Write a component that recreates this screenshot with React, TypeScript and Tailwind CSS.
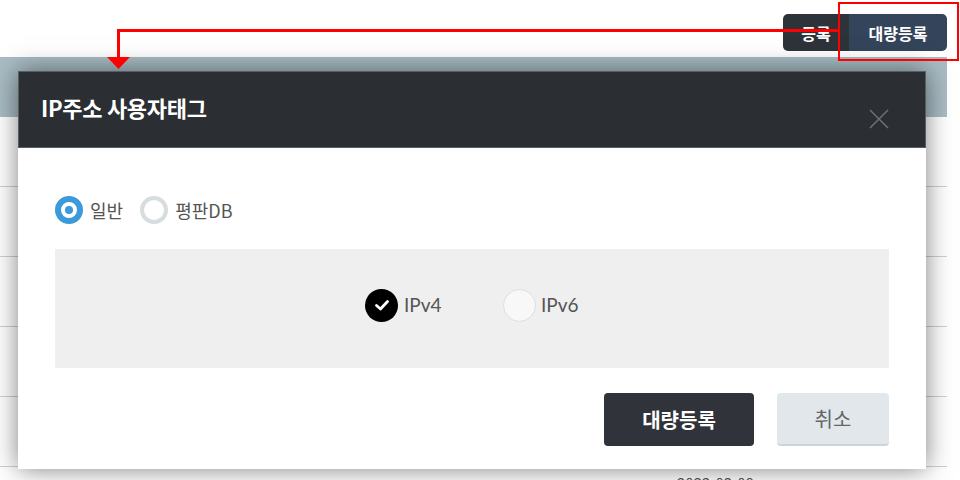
import React from "react";

const KR = { fontFamily: '"Noto Sans CJK KR", "Noto Sans", sans-serif' };
const LATO = { fontFamily: 'Lato, "Noto Sans CJK KR", sans-serif' };

export default function App() {
  const rows = [0, 1, 2, 3, 4];
  return (
    <div className="relative w-[960px] h-[480px] overflow-hidden bg-white" style={KR}>
      {/* toolbar */}
      <div className="flex justify-end h-[57px] pt-[14px] pr-[13px]">
        <div className="flex h-[37px] rounded-[5px] overflow-hidden text-[16px] font-bold text-white">
          <div className="w-[66px] bg-[#2e333a] flex items-center justify-center">등록</div>
          <div className="w-[98px] bg-[#34445a] flex items-center justify-center">대량등록</div>
        </div>
      </div>
      {/* background table */}
      <div className="w-[947px]">
        <div className="h-[60px] bg-[#a9bcc4]" />
        {rows.map((r) => (
          <div key={r} className="h-[70px] border-b border-[#cfcfcf] bg-white" />
        ))}
        <div className="pl-[677px] pt-[6px] text-[15px] leading-[20px] text-[#555]">2022-03-09</div>
      </div>

      {/* modal */}
      <div className="absolute left-[18px] top-[71px] w-[908px] h-[398px] bg-white shadow-[0_0_24px_rgba(0,0,0,0.5)] flex flex-col">
        <div className="h-[77px] bg-[#2b2e33] border border-[#5a5d61] flex items-center justify-between pl-[22px] pr-[36px]">
          <span className="text-white text-[22px] font-bold tracking-[-0.3px] mt-[-4px]">IP주소 사용자태그</span>
          <svg width="20" height="20" viewBox="0 0 20 20" className="mt-[18px]">
            <path d="M1 1 L19 19 M19 1 L1 19" stroke="#6c6f73" strokeWidth="1.6" />
          </svg>
        </div>
        <div className="flex-1 px-[37px] pt-[48px]">
          <div className="flex items-center h-[28px] text-[18px] text-[#555]">
            <span className="w-[28px] h-[28px] rounded-full border-[6px] border-[#3b9ad9] flex items-center justify-center">
              <span className="w-[8px] h-[8px] rounded-full bg-[#3b9ad9]" />
            </span>
            <span className="ml-[7px]">일반</span>
            <span className="ml-[17px] w-[28px] h-[28px] rounded-full border-[4px] border-[#d7dcdf]" />
            <span className="ml-[7px]">평판DB</span>
          </div>
          <div className="mt-[25px] h-[119px] bg-[#efefef] flex items-center pl-[310px] pb-[7px] text-[19px] text-[#555]" style={LATO}>
            <div className="w-[138px] flex items-center gap-[6px]">
              <span className="w-[33px] h-[33px] rounded-full bg-black flex items-center justify-center">
                <svg width="16" height="16" viewBox="0 0 16 16">
                  <path d="M2.5 8.5 L6.5 12 L13.5 4.5" fill="none" stroke="white" strokeWidth="2.8" strokeLinecap="round" strokeLinejoin="round" />
                </svg>
              </span>
              <span>IPv4</span>
            </div>
            <div className="flex items-center gap-[5px]">
              <span className="w-[33px] h-[33px] rounded-full bg-[#f8f8f8] border border-[#e2ddd8]" />
              <span>IPv6</span>
            </div>
          </div>
          <div className="flex justify-end gap-[23px] mt-[25px]">
            <button className="w-[150px] h-[53px] rounded-[4px] bg-[#30343a] text-white text-[20px] font-bold">대량등록</button>
            <button className="w-[112px] h-[53px] rounded-[4px] bg-[#e2e7ec] border-b-2 border-[#cdd3d9] text-[#666] text-[20px]">취소</button>
          </div>
        </div>
      </div>

      {/* red annotations */}
      <div className="absolute left-[838px] top-[2px] w-[121px] h-[59px] border-2 border-[#ff0000]" />
      <div className="absolute left-[117px] top-[29px] w-[722px] h-[3px] bg-[#ff0000]" />
      <div className="absolute left-[117px] top-[29px] w-[3px] h-[31px] bg-[#ff0000]" />
      <svg className="absolute left-[107px] top-[57px]" width="23" height="12" viewBox="0 0 23 12">
        <path d="M0 0 L23 0 L11.5 12 Z" fill="#ff0000" />
      </svg>
    </div>
  );
}
